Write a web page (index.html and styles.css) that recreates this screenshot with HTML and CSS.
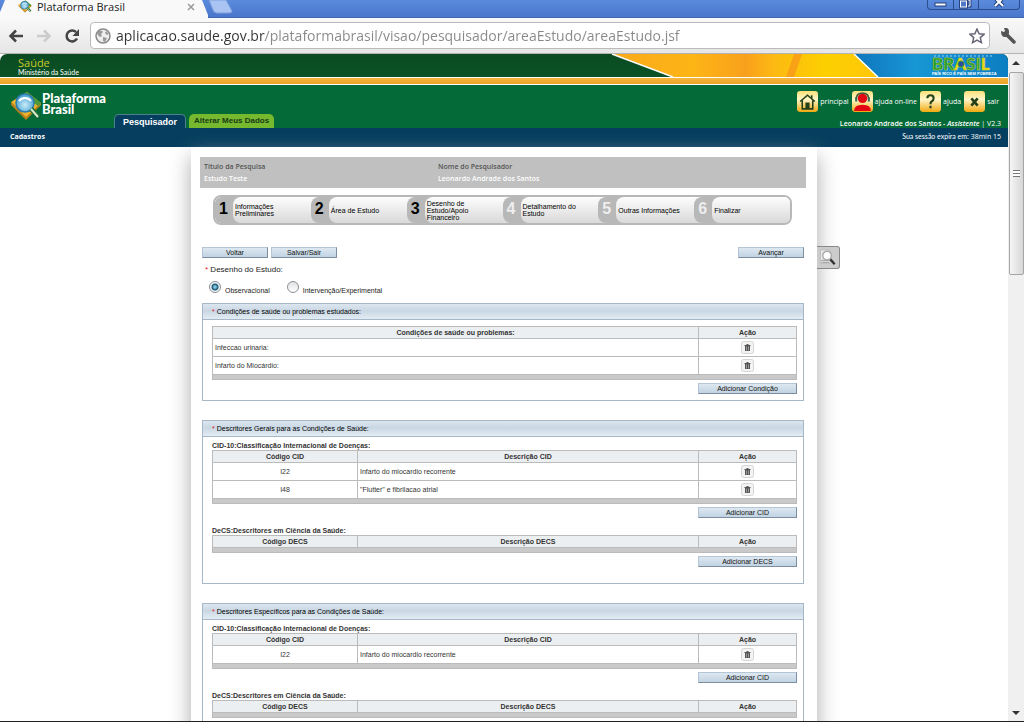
FILE: index.html
```html
<!DOCTYPE html>
<html lang="pt-BR">
<head>
<meta charset="utf-8">
<title>Plataforma Brasil</title>
<link rel="stylesheet" href="styles.css">
</head>
<body>
<svg class="defs" aria-hidden="true">
  <defs>
    <linearGradient id="gold" x1="0" y1="0" x2="0" y2="1"><stop offset="0" stop-color="#fbe17a"/><stop offset=".4" stop-color="#fff6c8"/><stop offset="1" stop-color="#f0a810"/></linearGradient>
    <radialGradient id="lens" cx=".5" cy=".6" r=".6"><stop offset="0" stop-color="#c9ecfa"/><stop offset="1" stop-color="#3f9cd0"/></radialGradient>
  </defs>
  <symbol id="logo" viewBox="0 0 32 30">
    <path d="M1 11 17 1l14 11-15 15z" fill="#f2b32c"/>
    <path d="M1 11v3l15 15v-3zM31 12v2L16 29v-3z" fill="#b8801a"/>
    <path d="m17 1 14 11-3 3L13 4z" fill="#4c9a3a"/>
    <circle cx="15" cy="12" r="9" fill="url(#lens)" stroke="#2b7cae" stroke-width="1.500"/>
    <path d="M9 10c3-4 9-4 12 0" fill="none" stroke="#fff" stroke-width="2"/>
    <path d="m21 18 8 8" stroke="#1c6d35" stroke-width="5"/>
    <path d="m21 18 7 8" stroke="#d7e7c9" stroke-width="2"/>
  </symbol>
  <symbol id="trash" viewBox="0 0 13 13">
    <rect x=".5" y=".5" width="12" height="12" rx="2" fill="#f3f3f3" stroke="#d6d6d6"/>
    <path d="M5.500 3h2v1h2v1h-.5v5H4V5h-.5V4h2z" fill="#555"/>
    <path d="M5.500 5.500v4M7.500 5.500v4" stroke="#999"/>
  </symbol>
</svg>

<header class="tabs">
  <div class="tab">
    <svg class="fav"><use href="#logo"/></svg>
    <span class="tab-title">Plataforma Brasil</span>
    <button class="tab-close" aria-label="Fechar guia"><svg viewBox="0 0 8 8"><path d="m1 1 6 6M7 1 1 7" stroke="#999" stroke-width="1.500"/></svg></button>
  </div>
  <button class="tab-new" aria-label="Nova guia"><svg viewBox="0 0 24 14"><path d="M0 0h17l6 11q0 2-3 2H8q-3 0-4-3z" fill="#a9c3f2" stroke="#7c9fdc"/></svg></button>
  <div class="win">
    <button aria-label="Minimizar"><svg viewBox="0 0 24 10"><rect x="6" y="3" width="11" height="3" fill="#fff" stroke="#23417c"/></svg></button>
    <button aria-label="Restaurar"><svg viewBox="0 0 24 10"><path d="M9 0h7v6h-3" fill="none" stroke="#23417c" stroke-width="3"/><path d="M9 0h7v6h-3" fill="none" stroke="#fff"/><rect x="6.500" y="1" width="6" height="6" fill="none" stroke="#23417c" stroke-width="3"/><rect x="6.500" y="1" width="6" height="6" fill="#4c78c8" stroke="#fff"/></svg></button>
    <button class="wide" aria-label="Fechar"><svg viewBox="0 0 40 10"><path d="m16 6 4-4 4 4M17-1l3 3 3-3" fill="none" stroke="#23417c" stroke-width="4"/><path d="m16 6 4-4 4 4M17-1l3 3 3-3" fill="none" stroke="#fff" stroke-width="2"/></svg></button>
  </div>
</header>

<div class="toolbar">
  <button aria-label="Voltar página"><svg viewBox="0 0 16 16"><path d="M15 8H3M8 2.500 2.500 8 8 13.500" fill="none" stroke="#444" stroke-width="2.500"/></svg></button>
  <button aria-label="Avançar página"><svg viewBox="0 0 16 16"><path d="M1 8h12M8 2.500 13.500 8 8 13.500" fill="none" stroke="#ccc" stroke-width="2.500"/></svg></button>
  <button aria-label="Recarregar"><svg viewBox="0 0 16 16"><path d="M13 10.500A5.500 5.500 0 1 1 12 4" fill="none" stroke="#444" stroke-width="2.500"/><path d="M15 1v7H8.500z" fill="#444"/></svg></button>
  <div class="omnibox">
    <svg class="globe" viewBox="0 0 16 16"><circle cx="8" cy="8" r="7" fill="#eee" stroke="#888" stroke-width="1.500"/><path d="M3 3q4-1 5 1L6 6l1 2-2 1-3-3zM8 9l4 1-2 4-2-1zM11 3l3 3-2 1-2-2z" fill="#999"/></svg>
    <input class="url" aria-label="Endereço" value="aplicacao.saude.gov.br/plataformabrasil/visao/pesquisador/areaEstudo/areaEstudo.jsf">
    <button class="star" aria-label="Favorito"><svg viewBox="0 0 16 16"><path d="m8 1 2.100 4.700 5 .5-3.800 3.400 1.100 5L8 12l-4.400 2.600 1.100-5L.9 6.200l5-.5z" fill="#fff" stroke="#667" stroke-width="1.500"/></svg></button>
  </div>
  <button aria-label="Configurações"><svg viewBox="0 0 16 16"><path d="m7 7 7 7" stroke="#555" stroke-width="3.500" stroke-linecap="round"/><path d="M1 3l3 1 1-1-1-3q5-1 5 4t-4 5Q1 9 1 3z" fill="#555"/></svg></button>
</div>

<div class="view">
  <div class="page">
    <div class="gov">
      <div class="ministry"><strong>Saúde</strong><span>Ministério da Saúde</span></div>
      <svg class="flag" viewBox="0 0 400 23">
        <defs>
          <linearGradient id="yel"><stop offset="0" stop-color="#f9a81c"/><stop offset=".3" stop-color="#fdb515"/><stop offset=".5" stop-color="#f9a01c"/><stop offset=".6" stop-color="#fdb913"/><stop offset=".8" stop-color="#fdd000"/><stop offset="1" stop-color="#ffc60b"/></linearGradient>
          <linearGradient id="blu"><stop offset="0" stop-color="#0f75bd"/><stop offset=".4" stop-color="#1797d4"/><stop offset="1" stop-color="#0c7dc2"/></linearGradient>
        </defs>
        <path d="M4 0h244l24 23H65z" fill="url(#yel)"/>
        <path d="m178 23 8-23h8l-8 23z" fill="#f58220" opacity=".5"/>
        <path d="M246 0h148q6 1 6 7v16H270z" fill="url(#blu)"/>
        <path d="m4 0 61 23M246 0l24 23" stroke="#fff" stroke-width="1.500"/>
        <path d="M326 2h58" stroke="#9fd0ea" stroke-dasharray="2 2"/>
        <text class="brasil" x="324" y="16"><tspan fill="#1b9a35">BR</tspan><tspan fill="#e8d818">A</tspan><tspan fill="#2f9a3c">S</tspan><tspan fill="#3aa838">I</tspan><tspan fill="#e8d818">L</tspan></text>
        <circle cx="353" cy="10" r="3" fill="#2c4aa0" stroke="#3a9a3c"/>
        <text class="motto" x="324" y="21">PAÍS RICO É PAÍS SEM POBREZA</text>
      </svg>
    </div>
    <div class="stripe"></div>
    <div class="brand">
      <a class="logo" href="#"><svg><use href="#logo"/></svg><span>Plataforma<br>Brasil</span></a>
      <nav class="sections"><a class="on" href="#">Pesquisador</a><a href="#">Alterar Meus Dados</a></nav>
      <div class="right">
        <nav class="tools">
          <a href="#"><svg viewBox="0 0 20 20"><rect width="20" height="20" rx="3" fill="url(#gold)"/><path d="m3 10 7-6 7 6M5 9v8h10V9M14 4v3" fill="none" stroke="#23401a" stroke-width="1.500"/><path d="M8 11h4v6H8z" fill="#23401a"/></svg>principal</a>
          <a href="#"><svg viewBox="0 0 20 20"><rect width="20" height="20" rx="3" fill="url(#gold)"/><circle cx="10" cy="7" r="4.500" fill="#e30613"/><path d="M2 19q0-6 8-6t8 6z" fill="#e30613"/><path d="M4 8q0-6 6-6t6 6" fill="none" stroke="#4a5a3a" stroke-width="1.500"/><path d="M3 6h2v4H3zM15 6h2v4h-2z" fill="#356b58"/></svg>ajuda on-line</a>
          <a href="#"><svg viewBox="0 0 20 20"><rect width="20" height="20" rx="3" fill="url(#gold)"/><path d="M7 7q0-3 3-3t3 3q0 2-2 3-1 .5-1 2.500M10 14v2.500" fill="none" stroke="#23401a" stroke-width="2"/></svg>ajuda</a>
          <a href="#"><svg viewBox="0 0 20 20"><rect width="20" height="20" rx="3" fill="url(#gold)"/><path d="m7 7 6 7M13 7l-6 7" stroke="#23401a" stroke-width="2.500"/></svg>sair</a>
        </nav>
        <p class="user"><b>Leonardo Andrade dos Santos - <i>Assistente</i></b> | V2.3</p>
      </div>
    </div>
    <div class="menu"><a href="#">Cadastros</a><span class="session">Sua sessão expira em: <span class="clock">38min 15</span></span></div>

    <main class="sheet">
      <button class="lookup" aria-label="Pesquisar"><svg viewBox="0 0 22 22"><path d="M3 3h10v14H3z" fill="#e8e8e8" stroke="#bbb"/><path d="M4 14h8M4 16h8" stroke="#999"/><circle cx="10" cy="9" r="4.500" fill="#fff" stroke="#aaa" stroke-width="1.500"/><path d="m13.500 13 4.500 5" stroke="#333" stroke-width="2.500"/></svg></button>
      <dl class="info">
        <div><dt>Título da Pesquisa</dt><dd>Estudo Teste</dd></div>
        <div><dt>Nome do Pesquisador</dt><dd>Leonardo Andrade dos Santos</dd></div>
      </dl>
      <ol class="steps">
        <li><b>1</b><span>Informações Preliminares</span></li>
        <li><b>2</b><span>Área de Estudo</span></li>
        <li><b>3</b><span>Desenho de Estudo/Apoio Financeiro</span></li>
        <li class="todo"><b>4</b><span>Detalhamento do Estudo</span></li>
        <li class="todo"><b>5</b><span>Outras Informações</span></li>
        <li class="todo"><b>6</b><span>Finalizar</span></li>
      </ol>
      <div class="actions"><button class="btn">Voltar</button><button class="btn">Salvar/Sair</button><button class="btn next">Avançar</button></div>
      <fieldset class="design">
        <legend><em>*</em> Desenho do Estudo:</legend>
        <div class="choices">
          <label><input type="radio" name="tipo" checked><span>Observacional</span></label>
          <label><input type="radio" name="tipo"><span>Intervenção/Experimental</span></label>
        </div>
      </fieldset>

      <section class="panel">
        <h2><em>*</em> Condições de saúde ou problemas estudados:</h2>
        <div class="body lone">
          <table>
            <colgroup><col><col class="c-act"></colgroup>
            <thead><tr><th>Condições de saúde ou problemas:</th><th>Ação</th></tr></thead>
            <tbody>
              <tr><td>Infeccao urinaria:</td><td><button class="del" aria-label="Excluir"><svg><use href="#trash"/></svg></button></td></tr>
              <tr><td>Infarto do Miocárdio:</td><td><button class="del" aria-label="Excluir"><svg><use href="#trash"/></svg></button></td></tr>
            </tbody>
            <tfoot><tr><td colspan="2"></td></tr></tfoot>
          </table>
          <button class="btn add">Adicionar Condição</button>
        </div>
      </section>

      <section class="panel">
        <h2><em>*</em> Descritores Gerais para as Condições de Saúde:</h2>
        <div class="body">
          <table>
            <caption>CID-10:Classificação Internacional de Doenças:</caption>
            <colgroup><col class="c-code"><col><col class="c-act"></colgroup>
            <thead><tr><th>Código CID</th><th>Descrição CID</th><th>Ação</th></tr></thead>
            <tbody>
              <tr><td class="code">I22</td><td>Infarto do miocardio recorrente</td><td><button class="del" aria-label="Excluir"><svg><use href="#trash"/></svg></button></td></tr>
              <tr><td class="code">I48</td><td>"Flutter" e fibrilacao atrial</td><td><button class="del" aria-label="Excluir"><svg><use href="#trash"/></svg></button></td></tr>
            </tbody>
            <tfoot><tr><td colspan="3"></td></tr></tfoot>
          </table>
          <button class="btn add">Adicionar CID</button>
          <table>
            <caption>DeCS:Descritores em Ciência da Saúde:</caption>
            <colgroup><col class="c-code"><col><col class="c-act"></colgroup>
            <thead><tr><th>Código DECS</th><th>Descrição DECS</th><th>Ação</th></tr></thead>
            <tfoot><tr><td colspan="3"></td></tr></tfoot>
          </table>
          <button class="btn add">Adicionar DECS</button>
        </div>
      </section>

      <section class="panel">
        <h2><em>*</em> Descritores Específicos para as Condições de Saúde:</h2>
        <div class="body">
          <table>
            <caption>CID-10:Classificação Internacional de Doenças:</caption>
            <colgroup><col class="c-code"><col><col class="c-act"></colgroup>
            <thead><tr><th>Código CID</th><th>Descrição CID</th><th>Ação</th></tr></thead>
            <tbody>
              <tr><td class="code">I22</td><td>Infarto do miocardio recorrente</td><td><button class="del" aria-label="Excluir"><svg><use href="#trash"/></svg></button></td></tr>
            </tbody>
            <tfoot><tr><td colspan="3"></td></tr></tfoot>
          </table>
          <button class="btn add">Adicionar CID</button>
          <table>
            <caption>DeCS:Descritores em Ciência da Saúde:</caption>
            <colgroup><col class="c-code"><col><col class="c-act"></colgroup>
            <thead><tr><th>Código DECS</th><th>Descrição DECS</th><th>Ação</th></tr></thead>
            <tfoot><tr><td colspan="3"></td></tr></tfoot>
          </table>
          <button class="btn add" aria-label="Adicionar DECS"></button>
        </div>
      </section>
    </main>
  </div>
  <div class="scroll" aria-hidden="true">
    <svg viewBox="0 0 8 4"><path d="M4 0l4 4H0z" fill="#333"/></svg>
    <div class="thumb"><i></i></div>
    <svg class="down" viewBox="0 0 8 4"><path d="M0 0h8L4 4z" fill="#333"/></svg>
  </div>
</div>
</body>
</html>
```
FILE: styles.css
```css
* { box-sizing: border-box; }
body {
  margin: 0;
  height: 100vh;
  display: flex;
  flex-direction: column;
  overflow: hidden;
  background: #fff;
  border-bottom: 1px solid #222;
  font: 8px/9px "Liberation Sans", Arial, sans-serif;
  color: #333;
}
button { padding: 0; border: 0; background: none; font: inherit; color: inherit; }
svg { display: block; }
a { color: inherit; text-decoration: none; }
p, h2, dl, dd, ol, fieldset { margin: 0; padding: 0; border: 0; }
em { color: #d22; font-style: normal; }
.defs { position: absolute; width: 0; height: 0; }

/* Browser frame */
.tabs {
  flex: none;
  height: 18px;
  display: flex;
  align-items: flex-start;
  background: linear-gradient(#5b8bdc, #4a76cc);
  border-bottom: 1px solid #3f65ad;
}
.tab {
  height: 18px;
  width: 208px;
  display: flex;
  align-items: flex-start;
  gap: 4px;
  padding: 0 13px 0 17px;
  background: #f9f9f9;
  clip-path: polygon(5px 0, 202px 0, 208px 15px, 208px 18px, 0 18px, 0 12px);
}
.fav { width: 16px; height: 13px; }
.tab-title { flex: 1; font: 11px/13px "Open Sans", sans-serif; color: #222; }
.tab-close { height: 13px; }
.tab-close svg { width: 8px; height: 8px; }
.tab-new svg { width: 26px; height: 14px; }
.win { margin-left: auto; margin-right: 4px; display: flex; border: 1px solid #2c4d8d; border-top: 0; border-radius: 0 0 4px 4px; }
.win button { width: 25px; height: 9px; overflow: hidden; }
.win button + button { border-left: 1px solid #2c4d8d; }
.win .wide { width: 41px; }
.win svg { height: 10px; margin: 0 auto; }
.toolbar {
  flex: none;
  height: 36px;
  display: flex;
  align-items: center;
  gap: 12px;
  padding: 0 8px;
  background: linear-gradient(#f9f9f9, #e6e6e6);
  border-bottom: 1px solid #b4b4b4;
}
.toolbar svg { width: 16px; height: 16px; }
.omnibox {
  flex: 1;
  height: 27px;
  margin: 0 -2px;
  display: flex;
  align-items: center;
  gap: 5px;
  padding: 0 4px;
  background: #fff;
  border: 1px solid #bbb;
  border-radius: 4px;
}
.url {
  flex: 1;
  min-width: 0;
  padding: 0;
  border: 0;
  font: 14px/22px "Open Sans", sans-serif;
  color: transparent;
  background: linear-gradient(90deg, #333 149px, #888 149px);
  -webkit-background-clip: text;
  background-clip: text;
}

/* Page and scroll bar */
.view { flex: 1; min-height: 0; display: flex; }
.page { flex: 1; min-width: 0; overflow: hidden; }
.scroll {
  width: 16px;
  display: flex;
  flex-direction: column;
  align-items: center;
  padding: 7px 0 6px;
  background: #f0f0f0;
}
.scroll svg { width: 8px; height: 4px; }
.scroll .down { margin-top: auto; }
.thumb {
  width: 15px;
  height: 31%;
  margin-top: 7px;
  display: grid;
  place-items: center;
  border: 1px solid #a5a5a5;
  border-radius: 2px;
  background: linear-gradient(90deg, #f6f6f6, #d6d6d6);
}
.thumb i { width: 7px; height: 7px; background: repeating-linear-gradient(#777 0 1px, #fff 1px 3px); }

/* Site header */
.gov {
  height: 23px;
  display: flex;
  justify-content: space-between;
  background: linear-gradient(#0b4a22, #0a5226);
  border-radius: 7px 6px 0 0;
}
.ministry { display: flex; flex-direction: column; padding: 3px 18px; color: #fff; font: 7px/8px Lato, sans-serif; }
.ministry strong { font: 11px/11px "Open Sans", sans-serif; color: #c9c92c; }
.flag { width: 400px; height: 23px; }
.brasil { font: 900 17px Lato, sans-serif; stroke: #d8d020; stroke-width: .5px; }
.motto { font: bold 4px "Liberation Sans", sans-serif; fill: #fff; }
.stripe { height: 8px; background: linear-gradient(#f6b53c, #eda128); border: solid #fff; border-width: 1px 0; }
.brand { height: 43px; display: flex; background: #046a38; color: #fff; }
.logo { display: flex; padding: 6px 8px 0 10px; font: 900 13px/11px Lato, sans-serif; }
.logo svg { width: 32px; height: 30px; }
.logo span { padding-top: 2px; }
.sections { display: flex; align-items: flex-end; gap: 3px; font-weight: bold; }
.sections a { height: 14px; padding: 0 5px; border-radius: 5px 5px 0 0; background: #76b82e; color: #163b16; line-height: 14px; }
.sections .on { padding: 0 8px; border: 1px solid #4f7f8e; border-bottom: 0; background: #053e5f; color: #fff; font-size: 9px; }
.right { margin-left: auto; padding: 6px 7px 0 0; display: flex; flex-direction: column; align-items: flex-end; gap: 7px; font: 7px/9px "Open Sans", sans-serif; }
.tools { display: flex; gap: 3px; padding-right: 2px; }
.tools a { display: flex; align-items: center; gap: 2px; }
.tools svg { width: 21px; height: 21px; }
.user b { font-weight: 600; }
.menu {
  height: 19px;
  display: flex;
  justify-content: space-between;
  padding: 4px 7px 0 10px;
  background: #053e5f;
  color: #fff;
  font: 7px/9px "Open Sans", sans-serif;
}
.menu a { font-weight: bold; }
.session { font-family: Lato, sans-serif; }
.clock { font-family: "Open Sans", sans-serif; }

/* Form sheet */
.sheet {
  position: relative;
  max-width: 626px;
  min-height: 100%;
  margin: 0 auto;
  padding: 10px 13px 0 11px;
  background: #fff;
  box-shadow: 0 10px 20px #aaa;
}
.lookup {
  position: absolute;
  left: 100%;
  top: 99px;
  width: 23px;
  height: 23px;
  border: 1px solid #888;
  border-left: 0;
  border-radius: 0 3px 3px 0;
  background: #ccc;
}
.lookup svg { width: 22px; height: 21px; }
.info {
  display: grid;
  grid-template-columns: 234px 1fr;
  margin: 0 -2px;
  padding: 5px 4px;
  background: #c0c0c0;
  font: 600 7px/9px "Open Sans", sans-serif;
}
.info div { display: grid; gap: 3px; }
.info dt { color: #555; }
.info dd { color: #fff; }
.steps {
  display: grid;
  grid-template-columns: repeat(6, 1fr);
  height: 30px;
  margin: 7px 12px 22px 11px;
  border: 2px solid #b8b8b8;
  border-radius: 8px;
  overflow: hidden;
  list-style: none;
  font-size: 7px;
  line-height: 7px;
  color: #000;
}
.steps li { display: flex; background: linear-gradient(#fdfdfd, #d9d9d9); }
.steps b { flex: none; width: 26px; margin-right: -8px; padding-left: 4px; border-radius: 8px 0 0 8px; background: #b8b8b8; font-size: 16px; line-height: 24px; }
.steps li:first-child b { border-radius: 0; }
.steps .todo b { color: #eee; }
.steps span { flex: 1; display: flex; align-items: center; padding: 0 10px 0 2px; border-radius: 8px 0 0 8px; background: linear-gradient(#fdfdfd, #d9d9d9); }
.actions { display: flex; gap: 3px; }
.btn {
  width: 66px;
  height: 11px;
  border: 1px solid;
  border-color: #b4c6d6 #7d8ea0 #7d8ea0 #b4c6d6;
  background: linear-gradient(#dde8f1, #c1d3e2);
  color: #111;
  font-size: 7px;
  line-height: 9px;
}
.next { margin-left: auto; }
.design { padding: 0 3px 8px; color: #222; }
.design legend { padding: 7px 0 0; color: #222; }
.choices { display: flex; gap: 17px; padding: 7px 4px 0; }
.choices label { display: flex; gap: 4px; font-size: 7px; }
.choices span { padding-top: 5px; }
.choices input {
  appearance: none;
  width: 12px;
  height: 12px;
  margin: 0;
  border: 1px solid #8a8f94;
  border-radius: 50%;
  background: linear-gradient(#e2e2e2, #fff);
}
.choices input:checked { background: radial-gradient(circle, #7fc4e0 0 1px, #17506f 3px 3px, #eef3f6 4px); }
.panel { margin-bottom: 19px; border: 1px solid #a6b8c8; }
.panel h2 {
  height: 16px;
  padding-left: 9px;
  border-bottom: 1px solid #a6b8c8;
  background: linear-gradient(#dce6ef, #c9d7e4 45%, #e3ecf3);
  font-size: 7px;
  font-weight: normal;
  line-height: 15px;
  color: #000;
}
.body { display: flex; flex-direction: column; align-items: flex-end; padding: 5px 6px 16px 9px; }
.lone { padding: 6px 6px; padding-left: 9px; }
table { width: 100%; table-layout: fixed; border-collapse: collapse; font-size: 7px; line-height: 8px; }
caption { height: 8px; text-align: left; font-weight: bold; line-height: 8px; }
.c-code { width: 145px; }
.c-act { width: 98px; }
th, td { padding: 0 2px; border: 1px solid #bbb; }
th { height: 12px; background: #eceff2; }
tbody td { height: 18px; }
tbody td:last-child { padding: 0; }
tbody .code { text-align: center; }
tfoot td { height: 5px; padding: 0; background: #c9c9c9; }
.del { display: block; width: 13px; height: 13px; margin: 0 auto; }
.del svg { width: 13px; height: 13px; }
.add { width: 99px; margin-top: 3px; }
.add + table { margin-top: 9px; }
```
